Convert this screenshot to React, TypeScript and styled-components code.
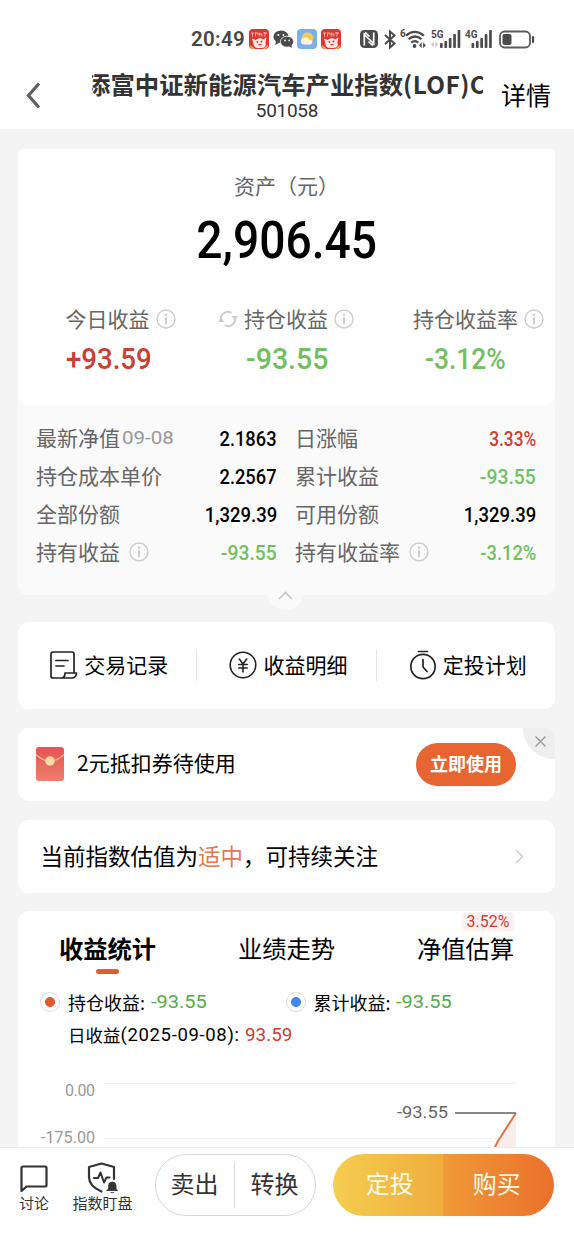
import React from "react";
import styled, { createGlobalStyle } from "styled-components";

const cjk = '"Noto Sans CJK SC", sans-serif';
const RED = "#cb3e34";
const GREEN = "#70c060";
const ORANGE = "#e76530";

const Global = createGlobalStyle`
  * { box-sizing: border-box; }
  body { margin: 0; background: #f4f4f4; font-family: ${cjk}; color: #000; }
  svg { display: block; flex: none; overflow: visible; }
`;

const Page = styled.div`
  width: 574px;
  height: 1246px;
  display: flex;
  flex-direction: column;
  overflow: hidden;
  background: #f4f4f4;
`;

const Num = styled.span<{ $size: number; $color?: string; $weight?: number; $sx?: number; $from?: string }>`
  display: inline-block;
  font-family: Roboto, ${cjk};
  font-size: ${(p) => p.$size}px;
  font-weight: ${(p) => p.$weight ?? 500};
  color: ${(p) => p.$color ?? "#000"};
  transform: scaleX(${(p) => p.$sx ?? 1});
  transform-origin: ${(p) => p.$from ?? "center"};
  white-space: nowrap;
`;

/* Status bar */
const StatusBar = styled.div`
  height: 60px;
  padding: 25px 0 0 191px;
  display: flex;
  background: #fff;
`;
const StatusInner = styled.div`
  display: flex;
  align-items: center;
  height: 28px;
`;
const Clock = styled.span`
  width: 58px;
  font: 600 20.5px/28px Roboto, sans-serif;
  letter-spacing: 0.3px;
  color: #474747;
`;
const Slot = styled.span<{ $w: number }>`
  width: ${(p) => p.$w}px;
  flex: none;
`;

/* Header */
const Header = styled.header`
  height: 69px;
  display: flex;
  background: #fff;
  padding: 0 22px 0 26px;
`;
const Back = styled.button`
  display: flex;
  align-items: flex-start;
  width: 65.5px;
  border: 0;
  padding: 22px 0 0;
  background: none;
`;
const TitleBox = styled.div`
  width: 391px;
  display: flex;
  flex-direction: column;
  align-items: center;
`;
const Title = styled.h1`
  width: 100%;
  margin: 6px 0 0;
  overflow: hidden;
  white-space: nowrap;
  text-indent: -5.5px;
  font: 700 24.4px/35px ${cjk};
  color: #333;
`;
const ShareClass = styled.span`
  letter-spacing: 0.4px;
`;
const Code = styled.div`
  font: 400 19px/20px Roboto, sans-serif;
  letter-spacing: -0.3px;
  color: #333;
`;
const Detail = styled.a`
  margin-left: 18.5px;
  font-size: 25px;
  line-height: 36px;
  padding-top: 16px;
`;

/* Main column */
const Main = styled.main`
  flex: 1;
  min-height: 0;
  overflow: hidden;
  padding: 20px 19px 0 18px;
  display: flex;
  flex-direction: column;
`;
const Card = styled.section<{ $h: number; $mt?: number }>`
  flex: none;
  height: ${(p) => p.$h}px;
  margin-top: ${(p) => p.$mt ?? 0}px;
  background: #fff;
  border-radius: 11px;
`;
const AssetCard = styled.section`
  position: relative;
  flex: none;
  height: 446px;
  background: #fafafa;
  border-radius: 5px 5px 10px 10px;
`;
const Summary = styled.div`
  height: 256px;
  background: #fff;
  border-radius: 5px 5px 10px 10px;
  display: flex;
  flex-direction: column;
  align-items: center;
`;
const AssetLabel = styled.div`
  margin-top: 21px;
  font-size: 21px;
  line-height: 30px;
  color: #666;
`;
const Total = styled.div`
  height: 62px;
  line-height: 62px;
  margin-top: 9px;
`;
const Stats = styled.div`
  width: 100%;
  display: flex;
  margin-top: 32px;
`;
const Stat = styled.div<{ $w: number; $pl: number; $vl: number }>`
  width: ${(p) => p.$w}px;
  padding-left: ${(p) => p.$pl}px;
  & > div:last-child { padding-left: ${(p) => p.$vl}px; }
`;
const StatLabel = styled.div`
  display: flex;
  align-items: center;
  gap: 6px;
  font-size: 21px;
  line-height: 30px;
  color: #666;
  white-space: nowrap;
  & > svg { margin-top: 2px; }
`;
const StatValue = styled.div`
  height: 36px;
  line-height: 36px;
  margin-top: 8px;
`;
const Details = styled.div`
  display: grid;
  grid-template-columns: 241px 241px;
  grid-auto-rows: 38px;
  column-gap: 18px;
  padding: 13px 18px 0;
`;
const Cell = styled.div`
  display: flex;
  align-items: center;
  font-size: 21px;
  line-height: 38px;
  color: #666;
  white-space: nowrap;
  & > svg { margin: 2px 0 0 9px; }
`;
const NavDate = styled(Num)`
  margin: 2px 0 0 2px;
`;
const CellValue = styled.span`
  margin-left: auto;
  height: 38px;
  line-height: 39px;
`;
const Collapse = styled.button`
  position: absolute;
  left: 249px;
  bottom: -15px;
  width: 37px;
  height: 37px;
  display: flex;
  padding: 18px 0 0 11px;
  border: 0;
  border-radius: 50%;
  background: #fafafa;
`;

const Actions = styled(Card)`
  display: flex;
  align-items: center;
`;
const Action = styled.div`
  flex: 1;
  display: flex;
  align-items: center;
  justify-content: center;
  gap: 7px;
  height: 31px;
  padding-left: 3px;
  font-size: 21px;
  & > span { margin-top: -4px; }
  & > svg { position: relative; left: 1px; top: -1px; }
  & + & { border-left: 1px solid #e8e8e8; }
`;

const Coupon = styled(Card)`
  position: relative;
  overflow: hidden;
  display: flex;
  align-items: center;
  padding: 0 39px 0 18px;
  font-size: 21px;
  & > span { margin: -5px 0 0 13px; flex: 1; }
`;
const UseButton = styled.button`
  width: 100px;
  height: 43px;
  border: 0;
  border-radius: 22px;
  background: ${ORANGE};
  color: #fff;
  font: 700 18px/38px ${cjk};
  padding: 0 0 4px;
`;
const Close = styled.button`
  position: absolute;
  top: 0;
  right: 0;
  width: 32px;
  height: 31px;
  display: flex;
  align-items: flex-start;
  padding: 8px 0 0 12px;
  border: 0;
  border-bottom-left-radius: 31px;
  background: #eee;
`;

const Valuation = styled(Card)`
  display: flex;
  align-items: center;
  justify-content: space-between;
  padding: 0 31px 0 22.5px;
  font-size: 22.5px;
  & > span { margin-top: -4px; }
  em { font-style: normal; color: #dc7a52; }
`;

const StatsCard = styled(Card)`
  border-radius: 11px 11px 0 0;
`;
const Tabs = styled.div`
  display: flex;
  height: 64px;
`;
const Tab = styled.div<{ $on?: boolean }>`
  position: relative;
  flex: 1;
  padding-top: 19px;
  text-align: center;
  font-size: 24.3px;
  line-height: 36px;
  font-weight: ${(p) => (p.$on ? 700 : 400)};
`;
const Underline = styled.i`
  display: block;
  width: 23px;
  height: 5px;
  margin: 3px auto 0;
  border-radius: 3px;
  background: #d95f36;
`;
const Badge = styled.span`
  position: absolute;
  top: 2px;
  left: 86px;
  width: 52px;
  height: 18px;
  border-radius: 4px;
  background: #fdf0ef;
  color: ${RED};
  font: 400 16px/18px Roboto, sans-serif;
`;
const Legend = styled.div`
  display: flex;
  padding-left: 22px;
  height: 34px;
  margin-top: 10px;
  align-items: center;
`;
const LegendItem = styled.div<{ $w?: number }>`
  display: flex;
  align-items: center;
  width: ${(p) => (p.$w ? p.$w + "px" : "auto")};
  font-size: 18px;
  line-height: 34px;
  white-space: nowrap;
  & > span { margin-left: 5.5px; }
`;
const Dot = styled.i<{ $c: string }>`
  width: 20px;
  height: 20px;
  margin-right: 8px;
  border: 1px solid #ddd;
  border-radius: 50%;
  background: radial-gradient(circle, ${(p) => p.$c} 4.6px, #fff 5.3px);
`;
const DayLine = styled.div`
  display: flex;
  padding-left: 50px;
  font-size: 17.5px;
  line-height: 32px;
  white-space: pre;
`;
const DayDate = styled(Num)`
  width: 124.5px;
  letter-spacing: 0.65px;
`;
const ChartBox = styled.div`
  height: 96px;
  overflow: hidden;
`;

/* Bottom bar */
const Bottom = styled.footer`
  position: relative;
  flex: none;
  height: 99px;
  border-top: 1px solid #ececec;
  background: #fff;
  display: flex;
  align-items: flex-start;
`;
const Tool = styled.div<{ $w: number; $ml: number; $fs: number }>`
  width: ${(p) => p.$w}px;
  margin: 14px 0 0 ${(p) => p.$ml}px;
  display: flex;
  flex-direction: column;
  align-items: center;
  color: #333;
  font-size: ${(p) => p.$fs}px;
  line-height: 20px;
  white-space: nowrap;
`;
const SellPill = styled.div`
  width: 161px;
  height: 62px;
  margin: 6px 0 0 22px;
  border: 1px solid #d6d6d6;
  border-radius: 31px;
  display: flex;
  align-items: center;
`;
const PillItem = styled.span`
  width: 78px;
  height: 46px;
  text-align: center;
  font-size: 24px;
  line-height: 42px;
  color: #333;
  & + & { width: 81px; border-left: 1px solid #ddd; }
`;
const BuyPill = styled.div`
  width: 221px;
  height: 62px;
  margin: 6px 0 0 17px;
  border-radius: 31px;
  overflow: hidden;
  display: flex;
`;
const BuyHalf = styled.button<{ $bg: string; $shift: number }>`
  flex: 1;
  border: 0;
  padding: 0 0 4px;
  text-indent: ${(p) => p.$shift}px;
  font: 400 24px/56px ${cjk};
  color: #fffbe6;
  background: ${(p) => p.$bg};
`;

const Info = () => (
  <svg width="20" height="20" viewBox="0 0 20 20" fill="none" stroke="#ccc">
    <circle cx="10" cy="10" r="9" strokeWidth="1.4" />
    <path d="M10 8.3V15" strokeWidth="2" />
    <circle cx="10" cy="5.700" r="1.200" fill="#ccc" stroke="none" />
  </svg>
);

const Mascot = () => (
  <svg width="20" height="20" viewBox="0 0 20 20">
    <rect width="20" height="20" rx="4" fill="#d83a32" />
    <path d="M2 4h3M3.500 4v3.500M6.500 3.500v4M6.500 4h2.500v2M11 3.500l-1 4M10 5h3v2.500M14 4h4M16 3v4.500" stroke="#f6c5bd" strokeWidth=".9" fill="none" />
    <path d="M3 9.500l3.500 1.500q4-3 7.500-.5l3.500-2-1 5q1.500 5-4 5.500H8q-4-1-3.500-4.500z" fill="#fbe9e4" />
    <circle cx="8.500" cy="13" r=".9" fill="#b93530" />
    <circle cx="12.500" cy="12.500" r=".9" fill="#b93530" />
    <path d="M9.500 15.800l3-.4" stroke="#d6453c" strokeWidth="1.500" />
    <path d="M1 16l5 4H4q-3-.5-3-4M19 16l-5 4h2q3-.5 3-4" fill="#f3b54e" />
  </svg>
);

const Bars = () => (
  <g fill="#4b4b4b">
    <rect x="0" y="14" width="2.7" height="5" rx=".8" />
    <rect x="4.4" y="12" width="2.7" height="7" rx=".8" />
    <rect x="8.8" y="9" width="2.7" height="10" rx=".8" />
    <rect x="13.2" y="5" width="2.7" height="14" rx=".8" />
    <rect x="17.6" y="1" width="2.7" height="18" rx=".8" />
  </g>
);

const StatusIcons = () => (
  <>
    <Slot $w={24}><Mascot /></Slot>
    <Slot $w={24}>
      <svg width="21" height="20" viewBox="0 0 21 20">
        <ellipse cx="8" cy="7.7" rx="7.6" ry="6.3" fill="#4b4b4b" />
        <path d="M3 12l-.7 4 4-2.2z" fill="#4b4b4b" />
        <ellipse cx="14" cy="12.7" rx="6.6" ry="5.5" fill="#4b4b4b" stroke="#fff" strokeWidth=".8" />
        <path d="M16 17l3 2-.7-3.5z" fill="#4b4b4b" />
        <g fill="#fff">
          <circle cx="5.4" cy="6" r="1" /><circle cx="10.4" cy="6" r="1" />
          <circle cx="12" cy="11.4" r=".9" /><circle cx="16.2" cy="11.4" r=".9" />
        </g>
      </svg>
    </Slot>
    <Slot $w={24}>
      <svg width="20" height="20" viewBox="0 0 20 20">
        <rect width="20" height="20" rx="4" fill="#78b2ec" />
        <circle cx="10.500" cy="9" r="5.800" fill="#f8c758" />
        <path d="M7 15.500a3.300 3.300 0 0 1-.6-6.500 4 4 0 0 1 6 2 2.300 2.300 0 1 1 1.400 4.500z" fill="#fdf3dc" />
      </svg>
    </Slot>
    <Slot $w={39}><Mascot /></Slot>
    <Slot $w={23.5}>
      <svg width="18" height="18" viewBox="0 0 18 18">
        <rect width="18" height="18" rx="4.5" fill="#4b4b4b" />
        <path d="M4.300 15.500V4.500L13.700 13.500V2.500M4.300 4.500l1.500-1.500L9.500 6.500M8.500 11.500l3.700 3.500 1.500-1.500" stroke="#fff" strokeWidth="1.700" fill="none" />
      </svg>
    </Slot>
    <Slot $w={16}>
      <svg width="12" height="19" viewBox="0 0 12 19" fill="none" stroke="#4b4b4b" strokeWidth="2">
        <path d="M1 5l9.500 8.500L6 17.500v-16l4.500 4L1 14" />
      </svg>
    </Slot>
    <Slot $w={31}>
      <svg width="26" height="20" viewBox="0 0 26 20" fill="none" stroke="#4b4b4b">
        <text x="0" y="8" fontFamily="Roboto" fontSize="10" fontWeight="700" fill="#4b4b4b" stroke="none">6</text>
        <path d="M6 6.600q8.500-7.500 18 0M8.600 10.200q6.400-5.500 12.800 0M11.300 13.600q3.700-3 7 0" strokeWidth="2.300" />
        <circle cx="14.500" cy="17" r="1.900" fill="#4b4b4b" stroke="none" />
        <path d="M19 16.300l2.700-3v6zM25.800 16.300l-2.700-3v6z" fill="#4b4b4b" stroke="none" />
      </svg>
    </Slot>
    <Slot $w={34}>
      <svg width="30" height="20" viewBox="0 0 30 20">
        <text x="0" y="9" fontFamily="Roboto" fontSize="11.500" fontWeight="700" fill="#4b4b4b" textLength="12.500" lengthAdjust="spacingAndGlyphs">5G</text>
        <path d="M0 15.500l2.700-3v6zM7 15.500l-2.700-3v6z" fill="#c4c4c4" />
        <g transform="translate(9 0)"><Bars /></g>
      </svg>
    </Slot>
    <Slot $w={34.5}>
      <svg width="30" height="20" viewBox="0 0 30 20">
        <text x="0" y="9" fontFamily="Roboto" fontSize="11.500" fontWeight="700" fill="#4b4b4b" textLength="12.500" lengthAdjust="spacingAndGlyphs">4G</text>
        <g transform="translate(6.500 0)"><Bars /></g>
      </svg>
    </Slot>
    <svg width="37" height="19" viewBox="0 0 37 19">
      <rect x="1" y="1.500" width="30" height="16" rx="4.500" fill="none" stroke="#5c5c5c" strokeWidth="1.800" />
      <rect x="3.500" y="4" width="9" height="11" rx="2" fill="#4b4b4b" />
      <path d="M34 7v5" stroke="#4b4b4b" strokeWidth="2.200" strokeLinecap="round" />
    </svg>
  </>
);

type Row = { label: string; date?: string; info?: boolean; value: string; color?: string; sx: number };
const rows: Row[] = [
  { label: "最新净值", date: "09-08", value: "2.1863", sx: 0.87 },
  { label: "日涨幅", value: "3.33%", color: RED, sx: 0.82 },
  { label: "持仓成本单价", value: "2.2567", sx: 0.87 },
  { label: "累计收益", value: "-93.55", color: GREEN, sx: 0.92 },
  { label: "全部份额", value: "1,329.39", sx: 0.88 },
  { label: "可用份额", value: "1,329.39", sx: 0.88 },
  { label: "持有收益", info: true, value: "-93.55", color: GREEN, sx: 0.92 },
  { label: "持有收益率", info: true, value: "-3.12%", color: GREEN, sx: 0.87 },
];

export default function App() {
  return (
    <Page>
      <Global />
      <StatusBar>
        <StatusInner>
          <Clock>20:49</Clock>
          <StatusIcons />
        </StatusInner>
      </StatusBar>
      <Header>
        <Back aria-label="返回">
          <svg width="15" height="27" viewBox="0 0 15 27" fill="none" stroke="#606060" strokeWidth="3.200">
            <path d="M13 1.500L2.500 13.500L13 25.500" />
          </svg>
        </Back>
        <TitleBox>
          <Title>添富中证新能源汽车产业指数<ShareClass>(LOF)C</ShareClass></Title>
          <Code>501058</Code>
        </TitleBox>
        <Detail>详情</Detail>
      </Header>

      <Main>
        <AssetCard>
          <Summary>
            <AssetLabel>资产（元）</AssetLabel>
            <Total><Num $size={52.5} $sx={0.88}>2,906.45</Num></Total>
            <Stats>
              <Stat $w={200} $pl={47.5} $vl={-1}>
                <StatLabel>今日收益<Info /></StatLabel>
                <StatValue><Num $size={30} $color={RED} $sx={0.92} $from="left">+93.59</Num></StatValue>
              </Stat>
              <Stat $w={195} $pl={0} $vl={28}>
                <StatLabel>
                  <svg width="20" height="20" viewBox="0 0 20 20" fill="none" stroke="#ccc" strokeWidth="2">
                    <path d="M3 11.500A7 7 0 0 1 13.500 4M17 8.500A7 7 0 0 1 6.500 16" />
                    <path d="M0 13h6.500L3 8.500zM20 7h-6.500l3.500 4.500z" fill="#ccc" stroke="none" />
                  </svg>
                  持仓收益<Info />
                </StatLabel>
                <StatValue><Num $size={30} $color={GREEN} $sx={0.95} $from="left">-93.55</Num></StatValue>
              </Stat>
              <Stat $w={142} $pl={0} $vl={12}>
                <StatLabel>持仓收益率<Info /></StatLabel>
                <StatValue><Num $size={30} $color={GREEN} $sx={0.88} $from="left">-3.12%</Num></StatValue>
              </Stat>
            </Stats>
          </Summary>
          <Details>
            {rows.map((r) => (
              <Cell key={r.label}>
                {r.label}
                {r.date && <NavDate $size={19} $weight={400} $color="#999" $sx={1.08} $from="left">{r.date}</NavDate>}
                {r.info && <Info />}
                <CellValue><Num $size={21} $color={r.color} $sx={r.sx} $from="right">{r.value}</Num></CellValue>
              </Cell>
            ))}
          </Details>
          <Collapse aria-label="收起">
            <svg width="15" height="9" viewBox="0 0 15 9" fill="none" stroke="#c4c4c4" strokeWidth="1.600">
              <path d="M1 8l6.500-6.500L14 8" />
            </svg>
          </Collapse>
        </AssetCard>

        <Actions $h={87} $mt={27}>
          <Action>
            <svg width="28" height="28" viewBox="0 0 28 28" fill="none" stroke="#222" strokeWidth="1.700" strokeLinecap="round" strokeLinejoin="round">
              <path d="M24 21V3q0-2-2-2H3Q1 1 1 3v22q0 2 2 2h19q4 0 4.500-5H15q0 5-4 5M6 9.500h12M6 15h8" />
            </svg>
            <span>交易记录</span>
          </Action>
          <Action>
            <svg width="28" height="28" viewBox="0 0 28 28" fill="none" stroke="#222" strokeWidth="1.600" strokeLinecap="round">
              <circle cx="14" cy="14" r="12.800" />
              <path d="M10.300 8l3.700 5 3.700-5M14 13v8M9.800 13.500h8.400M9.800 17h8.400" />
            </svg>
            <span>收益明细</span>
          </Action>
          <Action>
            <svg width="28" height="30" viewBox="0 0 28 30" fill="none" stroke="#222" strokeWidth="1.700" strokeLinecap="round">
              <circle cx="14" cy="16.500" r="12.200" />
              <path d="M9.500 1.500h9M14 9.500v7.500l4 4.500" />
            </svg>
            <span>定投计划</span>
          </Action>
        </Actions>

        <Coupon $h={73} $mt={19}>
          <svg width="28" height="35" viewBox="0 0 28 35">
            <defs>
              <linearGradient id="env" x1="0" y1="0" x2="0" y2="1">
                <stop offset="0" stopColor="#e65252" />
                <stop offset="1" stopColor="#ec806b" />
              </linearGradient>
            </defs>
            <rect width="28" height="34" rx="3" fill="url(#env)" />
            <path d="M0 7.500q14 13.500 28 0" fill="none" stroke="#f9b795" strokeWidth="1.200" />
            <circle cx="14" cy="14" r="4.700" fill="#fbdca6" />
          </svg>
          <span>2元抵扣券待使用</span>
          <UseButton>立即使用</UseButton>
          <Close aria-label="关闭">
            <svg width="11" height="11" viewBox="0 0 11 11" stroke="#999" strokeWidth="1.400">
              <path d="M.5.5l10 10M10.500.5l-10 10" />
            </svg>
          </Close>
        </Coupon>

        <Valuation $h={73} $mt={19}>
          <span>当前指数估值为<em>适中</em>，可持续关注</span>
          <svg width="9" height="15" viewBox="0 0 9 15" fill="none" stroke="#ccc" strokeWidth="1.500">
            <path d="M1 1l6.500 6.500L1 14" />
          </svg>
        </Valuation>

        <StatsCard $h={240} $mt={18}>
          <Tabs>
            <Tab $on>收益统计<Underline /></Tab>
            <Tab>业绩走势</Tab>
            <Tab>净值估算<Badge>3.52%</Badge></Tab>
          </Tabs>
          <Legend>
            <LegendItem $w={245.5}>
              <Dot $c="#e05a2e" />持仓收益:
              <Num $size={18.5} $weight={400} $color="#56ab48" $sx={1.08} $from="left">-93.55</Num>
            </LegendItem>
            <LegendItem>
              <Dot $c="#3f86f0" />累计收益:
              <Num $size={18.5} $weight={400} $color="#56ab48" $sx={1.08} $from="left">-93.55</Num>
            </LegendItem>
          </Legend>
          <DayLine>
            日收益<DayDate $size={18.5} $weight={400}>(2025-09-08):</DayDate>
            <Num $size={18.5} $weight={400} $color={RED} $sx={1.02} $from="left">93.59</Num>
          </DayLine>
          <ChartBox>
            <svg width="537" height="96" viewBox="0 0 537 96" fontFamily="Roboto" fontSize="16">
              <path d="M85 32.500H498M85 87.500H498" stroke="#f2f2f2" />
              <path d="M498 62L480 90L476 98H498z" fill="#fbeee9" />
              <path d="M498 62L480 90L476 98" fill="none" stroke="#d5764f" strokeWidth="2" />
              <path d="M437 62H498" stroke="#888" strokeWidth="1.800" />
              <text x="47" y="44.500" fill="#999" textLength="30">0.00</text>
              <text x="23" y="92" fill="#999" textLength="54" lengthAdjust="spacingAndGlyphs">-175.00</text>
              <text x="379" y="67" fill="#666" textLength="51" lengthAdjust="spacingAndGlyphs">-93.55</text>
            </svg>
          </ChartBox>
        </StatsCard>
      </Main>

      <Bottom>
        <Tool $w={30} $ml={19} $fs={14.8}>
          <svg width="28" height="31" viewBox="0 0 28 31" fill="none" stroke="#333" strokeWidth="2.200" strokeLinejoin="round">
            <path d="M1.500 29V6q0-1.500 1.500-1.500h22q1.500 0 1.500 1.500v17q0 1.500-1.500 1.500H6.500z" />
          </svg>
          讨论
        </Tool>
        <Tool $w={60} $ml={23.5} $fs={15}>
          <svg width="32" height="31" viewBox="0 0 32 31" fill="none" stroke="#333" strokeWidth="2.200" strokeLinecap="round" strokeLinejoin="round">
            <path d="M14.500 29.500Q2 24 2 15V5L14.500 1.500L27 5V17" />
            <path d="M7 16h4l2.500-5.500 3.500 10 2.500-5h3" strokeWidth="2" />
            <path d="M20 28.500h10.500l-1.500-2v-3q0-3.500-3.700-3.500t-3.700 3.500v3zM24 30.500h2.500" fill="#333" strokeWidth=".8" />
          </svg>
          指数盯盘
        </Tool>
        <SellPill>
          <PillItem>卖出</PillItem>
          <PillItem>转换</PillItem>
        </SellPill>
        <BuyPill>
          <BuyHalf $bg="linear-gradient(90deg, #f5cd4f, #f0ad3e)" $shift={4}>定投</BuyHalf>
          <BuyHalf $bg="linear-gradient(90deg, #f09a38, #ea6f2c)" $shift={-3}>购买</BuyHalf>
        </BuyPill>
      </Bottom>
    </Page>
  );
}
